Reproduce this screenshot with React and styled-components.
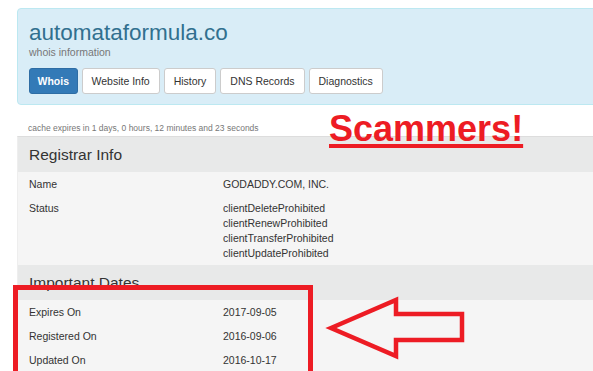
import React from 'react';
import styled, {createGlobalStyle} from 'styled-components';

// 전체 페이지 기본 스타일
const GlobalStyle = createGlobalStyle`
    html, body {
        margin: 0;
        padding: 0;
        background: #ffffff;
        overflow: hidden;
    }
    body {
        font-family: "Liberation Sans", Arial, sans-serif;
        color: #333333;
    }
`;

const Page = styled.div`
    position: relative;
    width: 593px;
    height: 371px;
    overflow: hidden;
`;

const Content = styled.div`
    width: 640px;
    padding: 8px 0 0 17px;
`;

const Jumbotron = styled.div`
    background: #d9edf7;
    border: 1px solid #bce8f1;
    border-radius: 4px;
    padding: 11px 11px 10px 11px;
    height: 74px;
`;

const Title = styled.div`
    font-size: 22.5px;
    line-height: 26px;
    color: #31708f;
`;

const SubTitle = styled.div`
    font-size: 10.5px;
    line-height: 13px;
    color: #777777;
`;

const TabRow = styled.div`
    display: flex;
    gap: 4px;
    margin-top: 8.5px;
`;

const TabButton = styled.div`
    height: 24px;
    line-height: 24px;
    padding: 0 ${p => (p.active ? '7.5px' : '9px')};
    font-size: 10.5px;
    border-radius: 3px;
    border: 1px solid ${p => (p.active ? '#2e6da4' : '#cccccc')};
    background: ${p => (p.active ? '#337ab7' : '#ffffff')};
    color: ${p => (p.active ? '#ffffff' : '#333333')};
    font-weight: ${p => (p.active ? 'bold' : 'normal')};
`;

const CacheNote = styled.div`
    font-size: 8.5px;
    line-height: 12px;
    color: #777777;
    padding-left: 11px;
    margin-top: 17px;
    margin-bottom: 2px;
`;

const Panel = styled.div`
    border-top: 1px solid #dddddd;
    border-left: 1px solid #eeeeee;
    background: #f5f5f5;
`;

const PanelHeader = styled.div`
    background: #e8e9e9;
    height: 35px;
    line-height: 35px;
    padding-left: 11px;
    font-size: 15.5px;
    color: #333333;
`;

const Row = styled.div`
    display: flex;
    padding: 4.5px 11px;
    font-size: 10.5px;
    line-height: 15px;
`;

const Label = styled.div`
    width: 194px;
    flex-shrink: 0;
`;

const Value = styled.div`
    display: flex;
    flex-direction: column;
`;

// 주석 레이어 (빨간 표시)
const Scammers = styled.div`
    position: absolute;
    left: 329px;
    top: 108px;
    font-size: 36px;
    line-height: 42px;
    font-weight: bold;
    color: #ed1c24;
    text-decoration: underline;
    text-decoration-thickness: 4px;
    text-underline-offset: 3px;
`;

const RedBox = styled.div`
    position: absolute;
    left: 13px;
    top: 285px;
    width: 290px;
    height: 120px;
    border: 5px solid #ed1c24;
`;

const ArrowSvg = styled.svg`
    position: absolute;
    left: 0;
    top: 0;
`;

const tabs = ['Whois', 'Website Info', 'History', 'DNS Records', 'Diagnostics'];

const App = () => {
    return (
        <Page>
            <GlobalStyle />
            <Content>
                <Jumbotron>
                    <Title>automataformula.co</Title>
                    <SubTitle>whois information</SubTitle>
                    <TabRow>
                        {tabs.map((t, i) => (
                            <TabButton key={t} active={i === 0}>{t}</TabButton>
                        ))}
                    </TabRow>
                </Jumbotron>
                <CacheNote>cache expires in 1 days, 0 hours, 12 minutes and 23 seconds</CacheNote>
                <Panel>
                    <PanelHeader>Registrar Info</PanelHeader>
                    <Row>
                        <Label>Name</Label>
                        <Value>GODADDY.COM, INC.</Value>
                    </Row>
                    <Row>
                        <Label>Status</Label>
                        <Value>
                            <span>clientDeleteProhibited</span>
                            <span>clientRenewProhibited</span>
                            <span>clientTransferProhibited</span>
                            <span>clientUpdateProhibited</span>
                        </Value>
                    </Row>
                    <PanelHeader>Important Dates</PanelHeader>
                    <Row>
                        <Label>Expires On</Label>
                        <Value>2017-09-05</Value>
                    </Row>
                    <Row>
                        <Label>Registered On</Label>
                        <Value>2016-09-06</Value>
                    </Row>
                    <Row>
                        <Label>Updated On</Label>
                        <Value>2016-10-17</Value>
                    </Row>
                </Panel>
            </Content>
            <Scammers>Scammers!</Scammers>
            <RedBox />
            <ArrowSvg width="593" height="371" viewBox="0 0 593 371">
                <polygon
                    points="331,328 396,300 396,314 462,314 462,340 396,340 396,356"
                    fill="none"
                    stroke="#ed1c24"
                    strokeWidth="4.5"
                    strokeLinejoin="miter"
                />
            </ArrowSvg>
        </Page>
    );
};

export default App;
